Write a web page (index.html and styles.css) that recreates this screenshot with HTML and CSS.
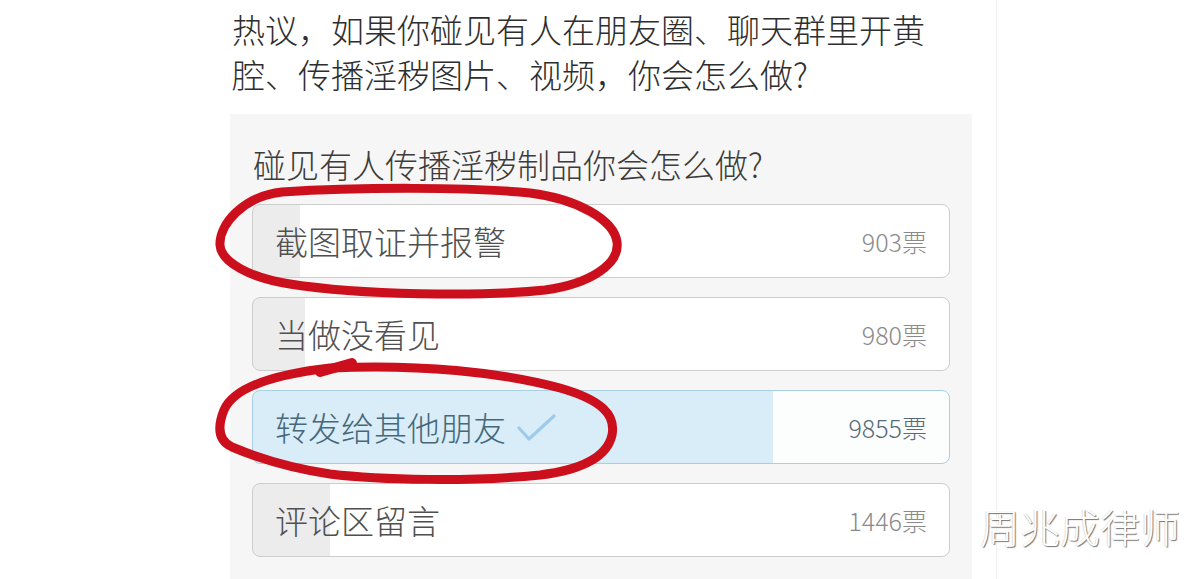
FILE: index.html
```html
<!DOCTYPE html>
<html lang="zh-CN">
<head>
<meta charset="utf-8">
<title>投票</title>
<link rel="stylesheet" href="styles.css">
</head>
<body>
<div class="page">
  <main class="article">
    <p class="lead">热议，如果你碰见有人在朋友圈、聊天群里开黄腔、传播淫秽图片、视频，你会怎么做?</p>
    <section class="poll">
      <h2 class="poll-title">碰见有人传播淫秽制品你会怎么做?</h2>
      <div class="options">
        <div class="option" style="--p: 6.8%">
          <span class="label">截图取证并报警</span>
          <span class="votes">903票</span>
        </div>
        <div class="option" style="--p: 7.4%">
          <span class="label">当做没看见</span>
          <span class="votes">980票</span>
        </div>
        <div class="option selected" style="--p: 74.7%">
          <span class="label">转发给其他朋友<svg class="check" width="40" height="30" viewBox="0 0 40 30"><path d="M3 15 L13 26 L38 3" fill="none" stroke="#9fcbea" stroke-width="3.2" stroke-linecap="round" stroke-linejoin="round"/></svg></span>
          <span class="votes">9855票</span>
        </div>
        <div class="option" style="--p: 11%">
          <span class="label">评论区留言</span>
          <span class="votes">1446票</span>
        </div>
      </div>
    </section>
  </main>
</div>
<svg class="marks" width="1200" height="579" viewBox="0 0 1200 579" aria-hidden="true">
  <g fill="none" stroke="#cc0f1c" stroke-width="9" stroke-linecap="round" stroke-linejoin="round">
    <path d="M282 192 C360 187 470 187 530 193 C578 199 614 220 617 242 C620 264 590 284 545 290 C480 297 360 295 290 284 C250 278 221 262 220 245 C219 224 244 196 282 192 Z"/>
    <path d="M330 368 C420 364 500 372 560 388 C602 400 616 415 612 435 C607 458 580 470 540 475 C470 482 380 480 330 474 C290 468 258 458 232 447 C217 440 218 425 224 410 C232 392 260 376 330 368 Z"/>
    <path d="M320 372 L352 363" stroke-width="10"/>
  </g>
</svg>
<div class="watermark">周兆成律师</div>
</body>
</html>
```
FILE: styles.css
```css
html, body {
  margin: 0;
  padding: 0;
  background: #ffffff;
}

body {
  font-family: "Noto Sans CJK SC", "Noto Sans", sans-serif;
  font-weight: 300;
  width: 1200px;
  height: 579px;
  overflow: hidden;
  position: relative;
}

.page {
  width: 997px;
  height: 579px;
  box-sizing: border-box;
  border-right: 1px solid #f0f0f0;
  padding-left: 230px;
}

.article {
  width: 742px;
  display: flex;
  flex-direction: column;
}

.lead {
  margin: 0;
  padding: 7px 0 0 2px;
  width: 712px;
  font-size: 33px;
  line-height: 45px;
  color: #2e2e2e;
}

.poll {
  margin-top: 17px;
  background: #f6f6f6;
  padding: 30px 22px 40px;
}

.poll-title {
  margin: 0 0 20px 1px;
  font-size: 33px;
  line-height: 40px;
  font-weight: 300;
  color: #3c3c3c;
}

.options {
  display: flex;
  flex-direction: column;
  gap: 19px;
}

.option {
  height: 74px;
  box-sizing: border-box;
  border: 1.5px solid #cdcdcd;
  border-radius: 8px;
  background: linear-gradient(to right, #ececec var(--p), #ffffff var(--p));
  display: flex;
  align-items: center;
  justify-content: space-between;
  padding: 0 22px 0 22px;
}

.label {
  font-size: 33px;
  line-height: 40px;
  color: #505050;
  display: flex;
  align-items: center;
}

.votes {
  font-size: 25px;
  color: #8a8a8a;
}

.option.selected {
  border-color: #a9cfe2;
  background: linear-gradient(to right, #d8edf8 var(--p), #fcfefe var(--p));
}

.option.selected .label {
  color: #46687a;
}

.option.selected .votes {
  color: #566b77;
}

.check {
  margin-left: 10px;
  margin-top: 2px;
}

.marks {
  position: absolute;
  left: 0;
  top: 0;
  pointer-events: none;
}

.watermark {
  position: absolute;
  left: 980px;
  top: 503px;
  font-size: 40px;
  line-height: 46px;
  font-weight: 300;
  color: #ffffff;
  text-shadow: 1px 1px 1px rgba(0, 0, 0, 0.55), -1px 0 0 rgba(0, 0, 0, 0.12);
}
```
